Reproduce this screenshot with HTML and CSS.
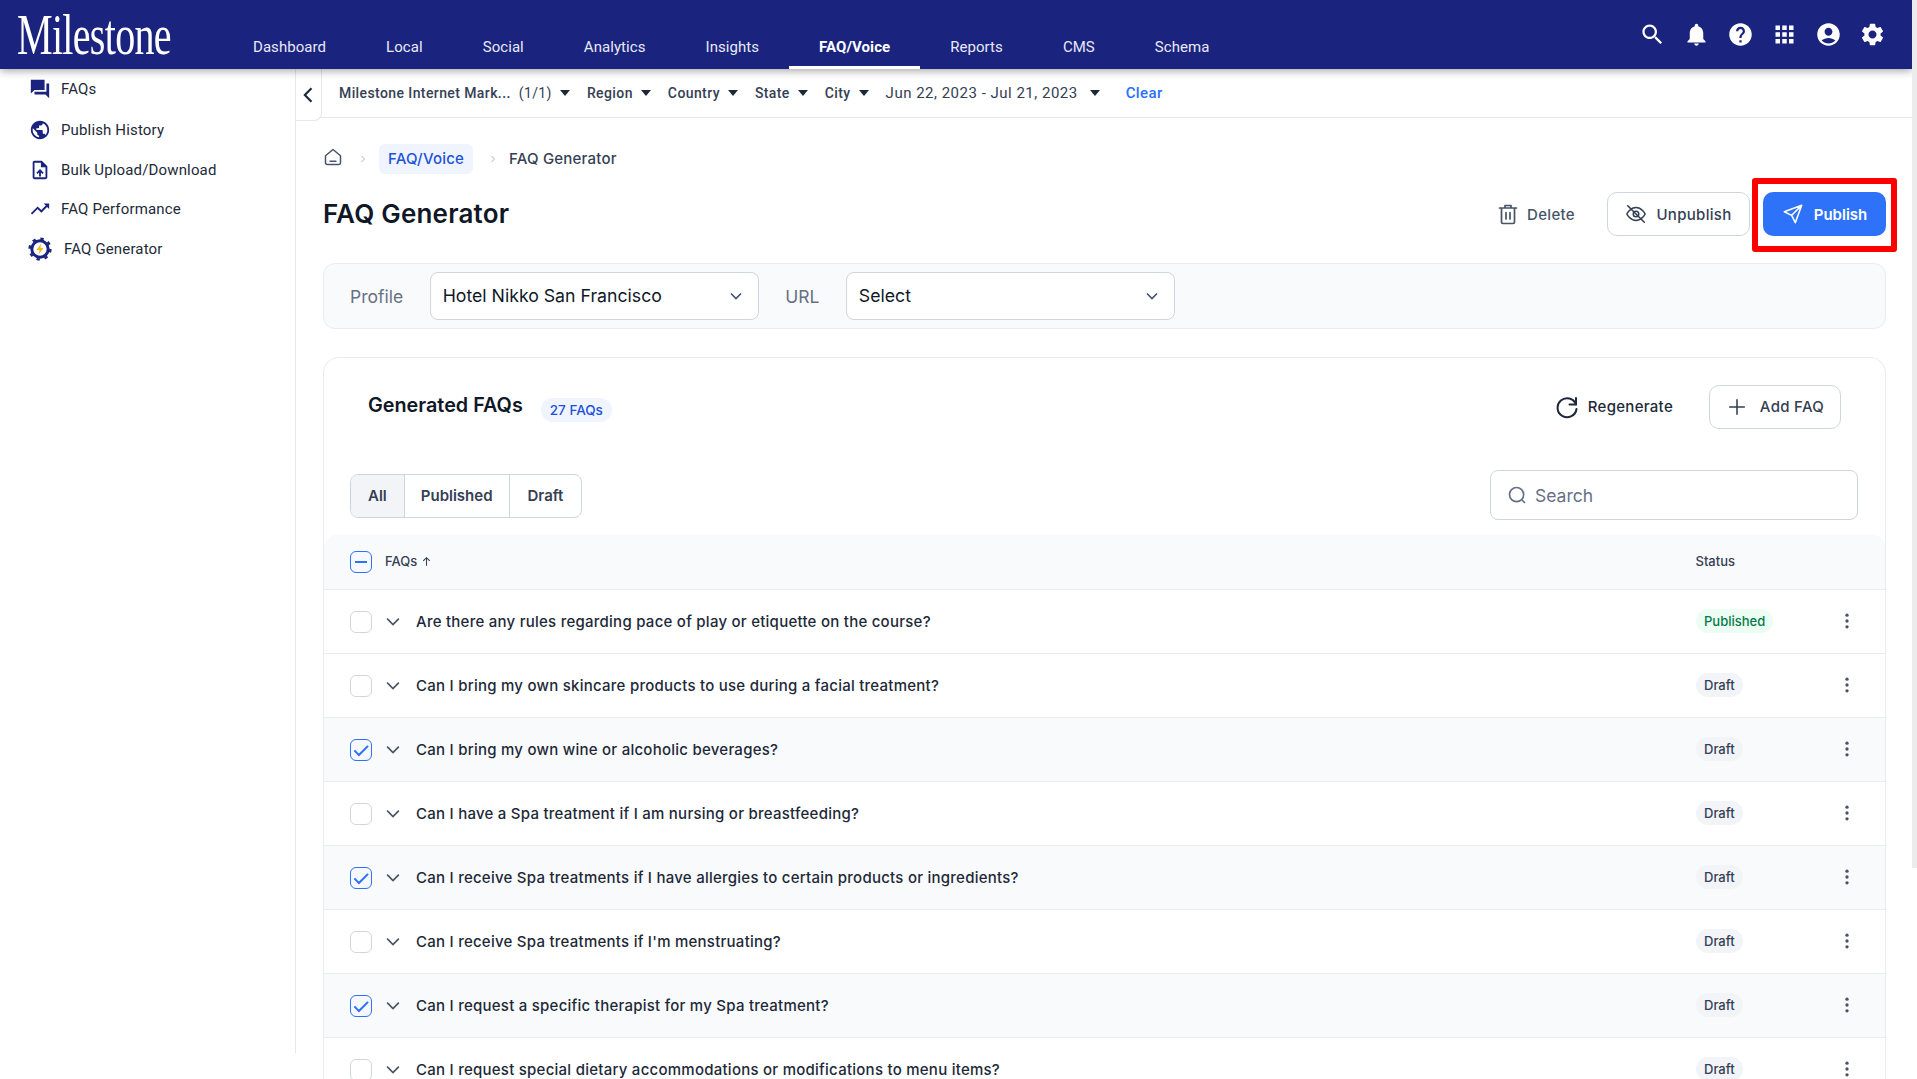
FILE: index.html
```html
<!DOCTYPE html>
<html lang="en">
<head>
    <meta charset="UTF-8">
    <title>FAQ Generator</title>
    <link rel="stylesheet" href="styles.css">
</head>
<body>
    <div class="page">
        <header class="topbar">
            <div class="logo-box"><span class="logo">Milestone</span></div>
            <nav class="nav">
                <a>Dashboard</a>
                <a>Local</a>
                <a>Social</a>
                <a>Analytics</a>
                <a>Insights</a>
                <a class="active">FAQ/Voice</a>
                <a>Reports</a>
                <a>CMS</a>
                <a>Schema</a>
            </nav>
            <div class="top-icons">
                <svg viewBox="0 0 24 24"><path d="M15.5 14h-.79l-.28-.27C15.41 12.59 16 11.11 16 9.5 16 5.91 13.09 3 9.5 3S3 5.91 3 9.5 5.91 16 9.5 16c1.61 0 3.09-.59 4.23-1.57l.27.28v.79l5 4.99L20.49 19l-4.99-5zm-6 0C7.01 14 5 11.99 5 9.5S7.01 5 9.5 5 14 7.01 14 9.5 11.99 14 9.5 14z"/></svg>
                <svg viewBox="0 0 24 24"><path d="M12 22c1.1 0 2-.9 2-2h-4c0 1.1.9 2 2 2zm6-6v-5c0-3.07-1.63-5.64-4.5-6.32V4c0-.83-.67-1.5-1.5-1.5s-1.5.67-1.5 1.5v.68C7.64 5.36 6 7.92 6 11v5l-2 2v1h16v-1l-2-2z"/></svg>
                <svg viewBox="0 0 24 24"><path d="M12 2C6.48 2 2 6.48 2 12s4.48 10 10 10 10-4.48 10-10S17.52 2 12 2zm1 17h-2v-2h2v2zm2.07-7.75l-.9.92C13.45 12.9 13 13.5 13 15h-2v-.5c0-1.1.45-2.1 1.17-2.83l1.24-1.26c.37-.36.59-.86.59-1.41 0-1.1-.9-2-2-2s-2 .9-2 2H8c0-2.21 1.79-4 4-4s4 1.79 4 4c0 .88-.36 1.68-.93 2.25z"/></svg>
                <svg viewBox="0 0 24 24"><path d="M4 8h4V4H4v4zm6 12h4v-4h-4v4zm-6 0h4v-4H4v4zm0-6h4v-4H4v4zm6 0h4v-4h-4v4zm6-10v4h4V4h-4zm-6 4h4V4h-4v4zm6 6h4v-4h-4v4zm0 6h4v-4h-4v4z"/></svg>
                <svg viewBox="0 0 24 24"><path d="M12 2C6.48 2 2 6.48 2 12s4.48 10 10 10 10-4.48 10-10S17.52 2 12 2zm0 4c1.93 0 3.5 1.57 3.5 3.5S13.93 13 12 13s-3.5-1.57-3.5-3.5S10.07 6 12 6zm0 14c-2.03 0-4.43-.82-6.14-2.88C7.55 15.8 9.68 15 12 15s4.45.8 6.14 2.12C16.43 19.18 14.03 20 12 20z"/></svg>
                <svg viewBox="0 0 24 24"><path d="M19.14 12.94c.04-.3.06-.61.06-.94 0-.32-.02-.64-.07-.94l2.03-1.58c.18-.14.23-.41.12-.61l-1.92-3.32c-.12-.22-.37-.29-.59-.22l-2.39.96c-.5-.38-1.03-.7-1.62-.94l-.36-2.54c-.04-.24-.24-.41-.48-.41h-3.84c-.24 0-.43.17-.47.41l-.36 2.54c-.59.24-1.13.57-1.62.94l-2.39-.96c-.22-.08-.47 0-.59.22L2.74 8.87c-.12.21-.08.47.12.61l2.03 1.58c-.05.3-.09.63-.09.94s.02.64.07.94l-2.03 1.58c-.18.14-.23.41-.12.61l1.92 3.32c.12.22.37.29.59.22l2.39-.96c.5.38 1.03.7 1.62.94l.36 2.54c.05.24.24.41.48.41h3.84c.24 0 .44-.17.47-.41l.36-2.54c.59-.24 1.13-.56 1.62-.94l2.39.96c.22.08.47 0 .59-.22l1.92-3.32c.12-.22.07-.47-.12-.61l-2.01-1.58zM12 15.6c-1.98 0-3.6-1.62-3.6-3.6s1.62-3.6 3.6-3.6 3.6 1.62 3.6 3.6-1.62 3.6-3.6 3.6z"/></svg>
            </div>
        </header>

        <div class="body-row">
            <aside class="sidebar">
                <a class="side-item">
                    <svg viewBox="0 0 24 24"><path d="M22 6h-3v9H6v3h12l4 4V6zm-5 7V2H2v15l4-4h11z"/></svg>
                    FAQs
                </a>
                <a class="side-item">
                    <svg viewBox="0 0 24 24"><path d="M12 2C6.48 2 2 6.48 2 12s4.48 10 10 10 10-4.48 10-10S17.52 2 12 2zm-1 17.93c-3.95-.49-7-3.85-7-7.93 0-.62.08-1.21.21-1.79L9 15v1c0 1.1.9 2 2 2v1.93zm6.9-2.54c-.26-.81-1-1.39-1.9-1.39h-1v-3c0-.55-.45-1-1-1H8v-2h2c.55 0 1-.45 1-1V7h2c1.1 0 2-.9 2-2v-.41c2.93 1.19 5 4.06 5 7.41 0 2.08-.8 3.97-2.1 5.39z"/></svg>
                    Publish History
                </a>
                <a class="side-item">
                    <svg viewBox="0 0 24 24"><path d="M14 2H6c-1.1 0-1.99.9-1.99 2L4 20c0 1.1.89 2 1.99 2H18c1.1 0 2-.9 2-2V8l-6-6zm4 18H6V4h7v5h5v11zM8 15.01l1.41 1.41L11 14.84V19h2v-4.16l1.59 1.59L16 15.01 12.01 11 8 15.01z"/></svg>
                    Bulk Upload/Download
                </a>
                <a class="side-item">
                    <svg viewBox="0 0 24 24"><path d="M16 6l2.29 2.29-4.88 4.88-4-4L2 16.59 3.41 18l6-6 4 4 6.3-6.29L22 12V6z"/></svg>
                    FAQ Performance
                </a>
                <a class="side-item generator">
                    <svg viewBox="0 0 24 24">
                        <circle cx="12" cy="12" r="8.2" fill="none" stroke="#1a237e" stroke-width="3"/>
                        <circle cx="12" cy="12" r="10.4" fill="none" stroke="#1a237e" stroke-width="2.4" stroke-dasharray="3.4 4.77"/>
                        <path class="bolt" d="M13.2 6.5 8.5 13h3l-.8 4.5 4.8-6.5h-3z"/>
                    </svg>
                    FAQ Generator
                </a>
            </aside>

            <main class="main">
                <button class="collapse-tab">
                    <svg viewBox="0 0 24 24"><path d="M15 4l-8 8 8 8"/></svg>
                </button>

                <div class="filters">
                    <span class="filter strong">Milestone Internet Mark...</span>
                    <span class="filter count">(1/1)<i class="caret"></i></span>
                    <span class="filter">Region<i class="caret"></i></span>
                    <span class="filter">Country<i class="caret"></i></span>
                    <span class="filter">State<i class="caret"></i></span>
                    <span class="filter">City<i class="caret"></i></span>
                    <span class="filter date">Jun 22, 2023 - Jul 21, 2023<i class="caret"></i></span>
                    <a class="clear">Clear</a>
                </div>

                <div class="content">
                    <div class="crumbs">
                        <svg class="home" viewBox="0 0 24 24"><path d="M3 10.5 12 3l9 7.500V19a2 2 0 0 1-2 2H5a2 2 0 0 1-2-2z"/><path d="M8.500 17h7"/></svg>
                        <svg class="sep" viewBox="0 0 24 24"><path d="M9 6l6 6-6 6"/></svg>
                        <a class="crumb-chip">FAQ/Voice</a>
                        <svg class="sep" viewBox="0 0 24 24"><path d="M9 6l6 6-6 6"/></svg>
                        <span class="crumb-now">FAQ Generator</span>
                    </div>

                    <div class="title-row">
                        <h1>FAQ Generator</h1>
                        <div class="actions">
                            <button class="btn plain delete">
                                <svg viewBox="0 0 24 24"><path d="M3.500 6h17M9 6V3.500h6V6M5.500 6v14a1.500 1.500 0 0 0 1.500 1.500h10a1.500 1.500 0 0 0 1.500-1.500V6M10 10.500v6.500M14 10.500v6.500"/></svg>
                                Delete
                            </button>
                            <button class="btn outline unpublish">
                                <svg viewBox="0 0 24 24"><path d="M2 12s3.600-7 10-7 10 7 10 7-3.600 7-10 7-10-7-10-7z"/><circle cx="12" cy="12" r="3"/><path d="M3 3l18 18"/></svg>
                                Unpublish
                            </button>
                            <div class="publish-wrap">
                                <button class="btn primary">
                                    <svg viewBox="0 0 24 24"><path d="M21.500 2.500 2.500 9.500l8 4 4 8zM21.500 2.500 10.500 13.500"/></svg>
                                    Publish
                                </button>
                                <span class="highlight"></span>
                            </div>
                        </div>
                    </div>

                    <div class="profile-bar">
                        <label>Profile</label>
                        <div class="select">Hotel Nikko San Francisco
                            <svg viewBox="0 0 24 24"><path d="M6 9l6 6 6-6"/></svg>
                        </div>
                        <label>URL</label>
                        <div class="select">Select
                            <svg viewBox="0 0 24 24"><path d="M6 9l6 6 6-6"/></svg>
                        </div>
                    </div>

                    <section class="card">
                        <div class="card-head">
                            <h2>Generated FAQs</h2>
                            <span class="count-badge">27 FAQs</span>
                            <button class="btn plain regen">
                                <svg viewBox="0 0 24 24"><path d="M21 3v6.500h-6.500"/><path d="M21 9.500A9.500 9.500 0 1 0 21.500 14"/></svg>
                                Regenerate
                            </button>
                            <button class="btn outline add">
                                <svg viewBox="0 0 24 24"><path d="M12 4v16M4 12h16"/></svg>
                                Add FAQ
                            </button>
                        </div>

                        <div class="tools">
                            <div class="tabs">
                                <span class="tab on">All</span>
                                <span class="tab">Published</span>
                                <span class="tab">Draft</span>
                            </div>
                            <div class="search">
                                <svg viewBox="0 0 24 24"><circle cx="11.500" cy="11.500" r="8.500"/><path d="M18 18l3.500 3.500"/></svg>
                                Search
                            </div>
                        </div>

                        <div class="thead">
                            <span class="check minus"></span>
                            <span class="th-faq">FAQs <svg viewBox="0 0 24 24"><path d="M12 20V5M6 11l6-6 6 6"/></svg></span>
                            <span class="th-status">Status</span>
                        </div>

                        <div class="row">
                            <span class="check"></span>
                            <svg class="chev" viewBox="0 0 24 24"><path d="M5 8l7 7 7-7"/></svg>
                            <span class="q">Are there any rules regarding pace of play or etiquette on the course?</span>
                            <span class="status-cell"><span class="pill green">Published</span></span>
                            <svg class="dots" viewBox="0 0 24 24"><circle cx="12" cy="5" r="2"/><circle cx="12" cy="12" r="2"/><circle cx="12" cy="19" r="2"/></svg>
                        </div>
                        <div class="row">
                            <span class="check"></span>
                            <svg class="chev" viewBox="0 0 24 24"><path d="M5 8l7 7 7-7"/></svg>
                            <span class="q">Can I bring my own skincare products to use during a facial treatment?</span>
                            <span class="status-cell"><span class="pill">Draft</span></span>
                            <svg class="dots" viewBox="0 0 24 24"><circle cx="12" cy="5" r="2"/><circle cx="12" cy="12" r="2"/><circle cx="12" cy="19" r="2"/></svg>
                        </div>
                        <div class="row picked">
                            <span class="check on"><svg viewBox="0 0 24 24"><path d="M4 12.500l5.500 5.500L20.500 7"/></svg></span>
                            <svg class="chev" viewBox="0 0 24 24"><path d="M5 8l7 7 7-7"/></svg>
                            <span class="q">Can I bring my own wine or alcoholic beverages?</span>
                            <span class="status-cell"><span class="pill">Draft</span></span>
                            <svg class="dots" viewBox="0 0 24 24"><circle cx="12" cy="5" r="2"/><circle cx="12" cy="12" r="2"/><circle cx="12" cy="19" r="2"/></svg>
                        </div>
                        <div class="row">
                            <span class="check"></span>
                            <svg class="chev" viewBox="0 0 24 24"><path d="M5 8l7 7 7-7"/></svg>
                            <span class="q">Can I have a Spa treatment if I am nursing or breastfeeding?</span>
                            <span class="status-cell"><span class="pill">Draft</span></span>
                            <svg class="dots" viewBox="0 0 24 24"><circle cx="12" cy="5" r="2"/><circle cx="12" cy="12" r="2"/><circle cx="12" cy="19" r="2"/></svg>
                        </div>
                        <div class="row picked">
                            <span class="check on"><svg viewBox="0 0 24 24"><path d="M4 12.500l5.500 5.500L20.500 7"/></svg></span>
                            <svg class="chev" viewBox="0 0 24 24"><path d="M5 8l7 7 7-7"/></svg>
                            <span class="q">Can I receive Spa treatments if I have allergies to certain products or ingredients?</span>
                            <span class="status-cell"><span class="pill">Draft</span></span>
                            <svg class="dots" viewBox="0 0 24 24"><circle cx="12" cy="5" r="2"/><circle cx="12" cy="12" r="2"/><circle cx="12" cy="19" r="2"/></svg>
                        </div>
                        <div class="row">
                            <span class="check"></span>
                            <svg class="chev" viewBox="0 0 24 24"><path d="M5 8l7 7 7-7"/></svg>
                            <span class="q">Can I receive Spa treatments if I'm menstruating?</span>
                            <span class="status-cell"><span class="pill">Draft</span></span>
                            <svg class="dots" viewBox="0 0 24 24"><circle cx="12" cy="5" r="2"/><circle cx="12" cy="12" r="2"/><circle cx="12" cy="19" r="2"/></svg>
                        </div>
                        <div class="row picked">
                            <span class="check on"><svg viewBox="0 0 24 24"><path d="M4 12.500l5.500 5.500L20.500 7"/></svg></span>
                            <svg class="chev" viewBox="0 0 24 24"><path d="M5 8l7 7 7-7"/></svg>
                            <span class="q">Can I request a specific therapist for my Spa treatment?</span>
                            <span class="status-cell"><span class="pill">Draft</span></span>
                            <svg class="dots" viewBox="0 0 24 24"><circle cx="12" cy="5" r="2"/><circle cx="12" cy="12" r="2"/><circle cx="12" cy="19" r="2"/></svg>
                        </div>
                        <div class="row">
                            <span class="check"></span>
                            <svg class="chev" viewBox="0 0 24 24"><path d="M5 8l7 7 7-7"/></svg>
                            <span class="q">Can I request special dietary accommodations or modifications to menu items?</span>
                            <span class="status-cell"><span class="pill">Draft</span></span>
                            <svg class="dots" viewBox="0 0 24 24"><circle cx="12" cy="5" r="2"/><circle cx="12" cy="12" r="2"/><circle cx="12" cy="19" r="2"/></svg>
                        </div>
                    </section>
                </div>
            </main>
        </div>
        <div class="scroll-thumb"></div>
    </div>
</body>
</html>
```

FILE: styles.css
```css
* {
    box-sizing: border-box;
}

html, body {
    margin: 0;
    height: 100%;
    overflow: hidden;
    background: white;
}

body {
    font-family: Inter, 'Liberation Sans', sans-serif;
    color: #101828;
}

.page {
    width: 1912px;
    height: 1079px;
    overflow: hidden;
}

svg {
    display: block;
}

button {
    font-family: inherit;
    cursor: pointer;
}

/* top bar */
.topbar {
    position: relative;
    z-index: 2;
    display: flex;
    height: 69px;
    background-color: #1a237e;
    box-shadow: 0 2px 8px rgba(0, 0, 0, 0.35);
}

.logo-box {
    width: 223px;
    overflow: hidden;
}

.logo {
    display: inline-block;
    margin: 2px 0 0 17px;
    color: white;
    font-family: 'Liberation Serif', serif;
    font-size: 58px;
    line-height: 66px;
    letter-spacing: -1px;
    transform: scaleX(0.69);
    transform-origin: left top;
}

.nav {
    display: flex;
    flex: 1;
}

.nav a {
    display: flex;
    align-items: center;
    height: 69px;
    padding: 28px 30px 0;
    border-bottom: 3px solid transparent;
    color: #e8eaf6;
    font-family: Roboto, sans-serif;
    font-size: 15px;
    letter-spacing: 0.06px;
}

.nav a.active {
    border-bottom-color: white;
    color: white;
    font-weight: 700;
}

.top-icons {
    display: flex;
    align-items: center;
    height: 69px;
    padding: 0 18px 0 0;
}

.top-icons svg {
    width: 27px;
    height: 27px;
    margin: 0 8.5px;
    fill: white;
}

/* sidebar */
.body-row {
    display: flex;
}

.sidebar {
    flex: none;
    width: 296px;
    height: 984px;
    border-right: 1px solid #e4e7ec;
}

.side-item {
    display: flex;
    align-items: center;
    gap: 10px;
    height: 40px;
    padding-left: 29px;
    color: #1d2939;
    font-family: Roboto, sans-serif;
    font-size: 15px;
    letter-spacing: 0.15px;
}

.side-item:nth-child(2) {
    margin-top: 1px;
}

.side-item:nth-child(4) {
    margin-top: -1px;
}

.side-item svg {
    flex: none;
    width: 22px;
    height: 22px;
    fill: #1a237e;
}

.side-item.generator {
    padding-left: 28px;
    gap: 12px;
}

.side-item.generator svg {
    width: 24px;
    height: 24px;
    fill: none;
}

.bolt {
    fill: #f5b81f;
}

/* main */
.main {
    position: relative;
    flex: 1;
    min-width: 0;
}

.collapse-tab {
    position: absolute;
    left: 0;
    top: 0;
    display: flex;
    align-items: center;
    justify-content: center;
    width: 26px;
    height: 52px;
    padding: 0;
    border: 1px solid #e4e7ec;
    border-width: 0 1px 1px 0;
    border-radius: 0 0 8px 0;
    background: white;
}

.collapse-tab svg {
    width: 20px;
    height: 20px;
    fill: none;
    stroke: #1d2939;
    stroke-width: 2.6;
}

.filters {
    display: flex;
    align-items: center;
    height: 49px;
    padding-left: 43px;
    border-bottom: 1px solid #e4e7ec;
    color: #344054;
    font-family: Roboto, sans-serif;
    font-size: 14px;
    letter-spacing: 0.4px;
}

.filter {
    display: flex;
    align-items: center;
    margin-right: 16.5px;
    font-weight: 500;
}

.filter.strong {
    margin-right: 8px;
}

.filter.count, .filter.date {
    font-weight: 400;
}

.caret {
    width: 0;
    height: 0;
    margin-left: 8.5px;
    border-left: 5.5px solid transparent;
    border-right: 5.5px solid transparent;
    border-top: 6px solid #1d2939;
}

.filter.date {
    margin-right: 26px;
    font-size: 15px;
    letter-spacing: 0.5px;
}

.filter.date .caret {
    margin-left: 12px;
}

.clear {
    color: #2970ff;
    font-size: 15px;
    font-weight: 500;
}

.content {
    padding: 26px 26px 0 27px;
}

.crumbs {
    display: flex;
    align-items: center;
    height: 30px;
}

.home {
    width: 20px;
    height: 20px;
    margin-top: -4px;
    fill: none;
    stroke: #475467;
    stroke-width: 1.8;
    stroke-linejoin: round;
    stroke-linecap: round;
}

.sep {
    width: 12px;
    height: 12px;
    margin: 0 10px 0 14px;
    fill: none;
    stroke: #b0b7c3;
    stroke-width: 2;
}

.crumb-chip {
    padding: 0 9px;
    height: 30px;
    border-radius: 6px;
    background-color: #eff4ff;
    color: #2052d8;
    font-size: 15px;
    font-weight: 500;
    letter-spacing: 0.2px;
    line-height: 30px;
}

.crumb-now {
    margin-top: -1px;
    color: #344054;
    font-size: 15px;
    font-weight: 500;
    letter-spacing: 0.2px;
}

.title-row {
    display: flex;
    align-items: center;
    justify-content: space-between;
    height: 44px;
    margin-top: 18px;
}

h1 {
    margin: -1px 0 0;
    font-size: 26px;
    font-weight: 600;
    letter-spacing: 0.2px;
    color: #101828;
}

.actions {
    display: flex;
    align-items: center;
    gap: 13px;
}

.btn {
    display: flex;
    align-items: center;
    justify-content: center;
    height: 44px;
    border: 1px solid transparent;
    border-radius: 10px;
    background: white;
    color: #344054;
    font-size: 15px;
    font-weight: 500;
    letter-spacing: 0.3px;
}

.btn svg {
    flex: none;
    width: 22px;
    height: 22px;
    fill: none;
    stroke: currentColor;
    stroke-width: 1.7;
    stroke-linecap: round;
    stroke-linejoin: round;
}

.btn.outline {
    border-color: #d0d5dd;
}

.delete {
    gap: 7px;
    width: 110px;
    margin-right: 3.5px;
    color: #475467;
}

.delete svg {
    width: 24px;
    height: 24px;
}

.unpublish {
    gap: 9px;
    width: 143px;
}

.publish-wrap {
    position: relative;
}

.btn.primary {
    gap: 10px;
    width: 123px;
    border-radius: 10px;
    background-color: #2e72fa;
    color: white;
    font-weight: 600;
    letter-spacing: 0;
}

.highlight {
    position: absolute;
    left: -11px;
    right: -11px;
    top: -14px;
    bottom: -16px;
    border: 6px solid #fe0000;
    border-radius: 3px;
    pointer-events: none;
}

.profile-bar {
    display: flex;
    align-items: center;
    height: 66px;
    margin-top: 27px;
    padding-left: 26px;
    border: 1px solid #eaecf0;
    border-radius: 12px;
    background-color: #f9fafb;
}

.profile-bar label {
    color: #667085;
    font-size: 17.5px;
}

.select {
    display: flex;
    align-items: center;
    justify-content: space-between;
    width: 329px;
    height: 48px;
    margin: 0 26.5px;
    padding: 0 12px 2px 12px;
    border: 1px solid #d0d5dd;
    border-radius: 8px;
    background: white;
    color: #101828;
    font-size: 17.7px;
}

.select svg {
    width: 20px;
    height: 20px;
    margin-top: 2px;
    fill: none;
    stroke: #475467;
    stroke-width: 2;
}

/* card */
.card {
    margin-top: 28px;
    border: 1px solid #eaecf0;
    border-bottom: none;
    border-radius: 16px 16px 0 0;
    background: white;
}

.card-head {
    display: flex;
    align-items: center;
    height: 43px;
    margin-top: 27px;
    padding: 0 44px;
}

h2 {
    margin: -4px 0 0;
    font-size: 19.8px;
    font-weight: 600;
}

.count-badge {
    height: 24px;
    margin: 6px auto 0 18px;
    padding: 0 9px;
    border-radius: 12px;
    background-color: #eff4ff;
    color: #2052d8;
    font-size: 13.500px;
    font-weight: 500;
    line-height: 24px;
}

.regen {
    gap: 9px;
    margin-right: 29px;
    color: #1d2939;
}

.regen svg {
    width: 24px;
    height: 24px;
    stroke-width: 2;
}

.add {
    gap: 12px;
    width: 132px;
    color: #344054;
}

.tools {
    display: flex;
    align-items: center;
    justify-content: space-between;
    height: 50px;
    margin-top: 42px;
    padding: 0 27px 0 26px;
}

.tabs {
    display: flex;
    height: 44px;
    margin-top: 1px;
    border: 1px solid #d0d5dd;
    border-radius: 8px;
    overflow: hidden;
}

.tab {
    display: flex;
    align-items: center;
    padding: 0 16px;
    border-left: 1px solid #d0d5dd;
    color: #344054;
    font-size: 15px;
    font-weight: 600;
}

.tab:first-child {
    border-left: none;
    padding: 0 17px;
}

.tab:last-child {
    padding: 0 18px;
}

.tab.on {
    background-color: #f2f4f7;
}

.search {
    display: flex;
    align-items: center;
    gap: 8px;
    width: 368px;
    height: 50px;
    padding-left: 16px;
    border: 1px solid #d0d5dd;
    border-radius: 8px;
    color: #667085;
    font-size: 17.500px;
}

.search svg {
    width: 20px;
    height: 20px;
    fill: none;
    stroke: #667085;
    stroke-width: 2;
}

.thead {
    display: flex;
    align-items: center;
    height: 55px;
    margin-top: 15px;
    padding-left: 26px;
    border-bottom: 1px solid #eaecf0;
    border-radius: 12px 12px 0 0;
    background-color: #f9fafb;
    color: #344054;
    font-size: 13px;
    font-weight: 500;
}

.th-faq {
    display: flex;
    align-items: center;
    gap: 3px;
    margin: -2px 0 0 13px;
}

.th-faq svg {
    width: 13px;
    height: 13px;
    fill: none;
    stroke: #344054;
    stroke-width: 2;
}

.th-status {
    margin: -2px 150px 0 auto;
}

.check {
    flex: none;
    display: flex;
    align-items: center;
    justify-content: center;
    width: 22px;
    height: 22px;
    border: 1px solid #d0d5dd;
    border-radius: 6px;
    background: white;
}

.check.on, .check.minus {
    border: 1.5px solid #2e72fa;
    background-color: #f5f8ff;
}

.check.on svg {
    width: 20px;
    height: 20px;
    fill: none;
    stroke: #2e72fa;
    stroke-width: 2.4;
}

.check.minus::after {
    content: '';
    width: 12px;
    height: 2px;
    background-color: #2e72fa;
}

.row {
    display: flex;
    align-items: center;
    height: 64px;
    padding-left: 26px;
    border-bottom: 1px solid #eaecf0;
}

.row.picked {
    background-color: #f9fafb;
}

.chev {
    flex: none;
    width: 20px;
    height: 20px;
    margin: 0 13px 0 11px;
    fill: none;
    stroke: #475467;
    stroke-width: 2;
}

.q {
    flex: 1;
    color: #1d2939;
    font-size: 15px;
    font-weight: 500;
    letter-spacing: 0.25px;
}

.status-cell {
    width: 131px;
    margin-top: -1px;
}

.pill {
    display: inline-block;
    height: 24px;
    padding: 0 8px;
    border-radius: 12px;
    background-color: #f2f4f7;
    color: #344054;
    font-size: 13px;
    font-weight: 500;
    line-height: 24px;
}

.pill.green {
    background-color: #ecfdf3;
    color: #027a48;
}

.dots {
    flex: none;
    width: 20px;
    height: 20px;
    margin: -2px 28px 0 10px;
    fill: #475467;
}

.scroll-thumb {
    position: fixed;
    top: 0;
    right: 0;
    width: 5px;
    height: 868px;
    background-color: #ececec;
}
```
